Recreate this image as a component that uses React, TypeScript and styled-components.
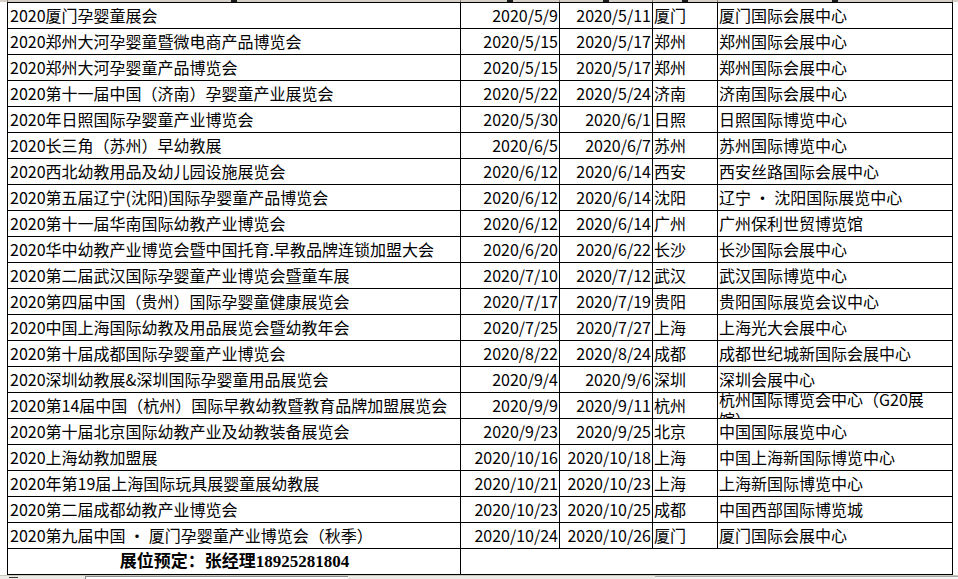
import React from "react"
import styled, { createGlobalStyle } from "styled-components"

interface ExpoRow {
  name: string
  start: string
  end: string
  city: string
  venue: string
  wrapVenue?: boolean
}

const expos: ExpoRow[] = [
  { name: "2020厦门孕婴童展会", start: "2020/5/9", end: "2020/5/11", city: "厦门", venue: "厦门国际会展中心" },
  { name: "2020郑州大河孕婴童暨微电商产品博览会", start: "2020/5/15", end: "2020/5/17", city: "郑州", venue: "郑州国际会展中心" },
  { name: "2020郑州大河孕婴童产品博览会", start: "2020/5/15", end: "2020/5/17", city: "郑州", venue: "郑州国际会展中心" },
  { name: "2020第十一届中国（济南）孕婴童产业展览会", start: "2020/5/22", end: "2020/5/24", city: "济南", venue: "济南国际会展中心" },
  { name: "2020年日照国际孕婴童产业博览会", start: "2020/5/30", end: "2020/6/1", city: "日照", venue: "日照国际博览中心" },
  { name: "2020长三角（苏州）早幼教展", start: "2020/6/5", end: "2020/6/7", city: "苏州", venue: "苏州国际博览中心" },
  { name: "2020西北幼教用品及幼儿园设施展览会", start: "2020/6/12", end: "2020/6/14", city: "西安", venue: "西安丝路国际会展中心" },
  { name: "2020第五届辽宁(沈阳)国际孕婴童产品博览会", start: "2020/6/12", end: "2020/6/14", city: "沈阳", venue: "辽宁 · 沈阳国际展览中心" },
  { name: "2020第十一届华南国际幼教产业博览会", start: "2020/6/12", end: "2020/6/14", city: "广州", venue: "广州保利世贸博览馆" },
  { name: "2020华中幼教产业博览会暨中国托育.早教品牌连锁加盟大会", start: "2020/6/20", end: "2020/6/22", city: "长沙", venue: "长沙国际会展中心" },
  { name: "2020第二届武汉国际孕婴童产业博览会暨童车展", start: "2020/7/10", end: "2020/7/12", city: "武汉", venue: "武汉国际博览中心" },
  { name: "2020第四届中国（贵州）国际孕婴童健康展览会", start: "2020/7/17", end: "2020/7/19", city: "贵阳", venue: "贵阳国际展览会议中心" },
  { name: "2020中国上海国际幼教及用品展览会暨幼教年会", start: "2020/7/25", end: "2020/7/27", city: "上海", venue: "上海光大会展中心" },
  { name: "2020第十届成都国际孕婴童产业博览会", start: "2020/8/22", end: "2020/8/24", city: "成都", venue: "成都世纪城新国际会展中心" },
  { name: "2020深圳幼教展&深圳国际孕婴童用品展览会", start: "2020/9/4", end: "2020/9/6", city: "深圳", venue: "深圳会展中心" },
  { name: "2020第14届中国（杭州）国际早教幼教暨教育品牌加盟展览会", start: "2020/9/9", end: "2020/9/11", city: "杭州", venue: "杭州国际博览会中心（G20展馆）", wrapVenue: true },
  { name: "2020第十届北京国际幼教产业及幼教装备展览会", start: "2020/9/23", end: "2020/9/25", city: "北京", venue: "中国国际展览中心" },
  { name: "2020上海幼教加盟展", start: "2020/10/16", end: "2020/10/18", city: "上海", venue: "中国上海新国际博览中心" },
  { name: "2020年第19届上海国际玩具展婴童展幼教展", start: "2020/10/21", end: "2020/10/23", city: "上海", venue: "上海新国际博览中心" },
  { name: "2020第二届成都幼教产业博览会", start: "2020/10/23", end: "2020/10/25", city: "成都", venue: "中国西部国际博览城" },
  { name: "2020第九届中国 · 厦门孕婴童产业博览会（秋季）", start: "2020/10/24", end: "2020/10/26", city: "厦门", venue: "厦门国际会展中心" },
]

const columnKeys = ["A", "B", "C", "D", "E"]

// widths include the 1px right gridline of each column
const COLUMNS = "453px 99px 93px 65px 235px"

const GlobalStyle = createGlobalStyle`
  html, body {
    margin: 0;
    padding: 0;
    background: #ffffff;
  }
  body {
    font-family: "Noto Sans CJK SC", "Noto Sans", sans-serif;
    color: #000000;
  }
`

const Page = styled.div`
  width: 958px;
  height: 579px;
  display: flex;
  flex-direction: column;
  overflow: hidden;
  background: #ffffff;
`

const ColumnHeader = styled.div`
  display: grid;
  grid-template-columns: 8px ${COLUMNS} 1fr;
  height: 2px;
  flex-shrink: 0;
  background: #d4d0c8;
`

const HeaderCell = styled.div`
  display: flex;
  justify-content: center;
  align-items: flex-end;
  overflow: hidden;
  border-right: 1px solid #8a877f;
`

/* bottom edge of the column letter, the rest is scrolled out of view */
const HeaderTick = styled.span`
  width: 6px;
  height: 2px;
  background: #1a1a1a;
`

const Sheet = styled.div`
  display: flex;
  flex-shrink: 0;
`

const Gutter = styled.div`
  width: 7px;
  flex-shrink: 0;
`

const Table = styled.div`
  display: flex;
  flex-direction: column;
  border-left: 1px solid #000000;
  border-top: 1px solid #000000;
`

const Row = styled.div`
  display: grid;
  grid-template-columns: ${COLUMNS};
  height: 26px;
`

const Cell = styled.div<{ $align?: "left" | "right" | "center" }>`
  box-sizing: border-box;
  height: 26px;
  border-right: 1px solid #000000;
  border-bottom: 1px solid #000000;
  padding: 0 ${(p) => (p.$align === "right" ? "1px" : "0")} 0
    ${(p) => (p.$align === "left" ? "2px" : "1px")};
  font-size: 16px;
  line-height: 25px;
  text-align: ${(p) => p.$align ?? "left"};
  white-space: nowrap;
  overflow: hidden;
`

const WrapCell = styled(Cell)`
  white-space: normal;
`

const WrapText = styled.div`
  width: 212px;
  line-height: 20px;
  margin-top: -4px;
`

const FooterLabel = styled(Cell)`
  text-align: center;
  font-family: "Liberation Serif", "Noto Sans CJK SC", serif;
  font-weight: 700;
  font-size: 17px;
  line-height: 26px;
`

const MergedCell = styled(Cell)`
  grid-column: span 4;
`

const BottomBar = styled.div`
  flex: 1;
  display: flex;
  background: #ecebe6;
  border-top: 1px solid #c9c7c0;
`

const TabScroller = styled.div`
  width: 85px;
  display: flex;
  align-items: flex-start;
  padding-left: 9px;
  box-sizing: border-box;
`

const TabArrow = styled.span`
  width: 9px;
  height: 1px;
  margin-top: 1px;
  background: #3a3a3a;
`

const SheetTabs = styled.div`
  width: 262px;
  background: #ffffff;
  border-left: 1px solid #8a8a8a;
  border-top: 1px solid #8a8a8a;
`

const Splitter = styled.div`
  flex: 1;
`

const ScrollTrack = styled.div`
  width: 303px;
  border-top: 1px solid #a8a8a8;
  background: #f4f4f2;
`

const App: React.FC = () => {
  return (
    <Page>
      <GlobalStyle />
      <ColumnHeader>
        <HeaderCell />
        {columnKeys.map((key) => (
          <HeaderCell key={key}>
            <HeaderTick />
          </HeaderCell>
        ))}
        <div />
      </ColumnHeader>

      <Sheet>
        <Gutter />
        <Table>
          {expos.map((expo) => (
            <Row key={expo.name}>
              <Cell $align="left">{expo.name}</Cell>
              <Cell $align="right">{expo.start}</Cell>
              <Cell $align="right">{expo.end}</Cell>
              <Cell>{expo.city}</Cell>
              {expo.wrapVenue ? (
                <WrapCell>
                  <WrapText>{expo.venue}</WrapText>
                </WrapCell>
              ) : (
                <Cell>{expo.venue}</Cell>
              )}
            </Row>
          ))}
          <Row>
            <FooterLabel>展位预定：张经理18925281804</FooterLabel>
            <MergedCell />
          </Row>
        </Table>
      </Sheet>

      <BottomBar>
        <TabScroller>
          <TabArrow />
        </TabScroller>
        <SheetTabs />
        <Splitter />
        <ScrollTrack />
      </BottomBar>
    </Page>
  )
}

export default App
